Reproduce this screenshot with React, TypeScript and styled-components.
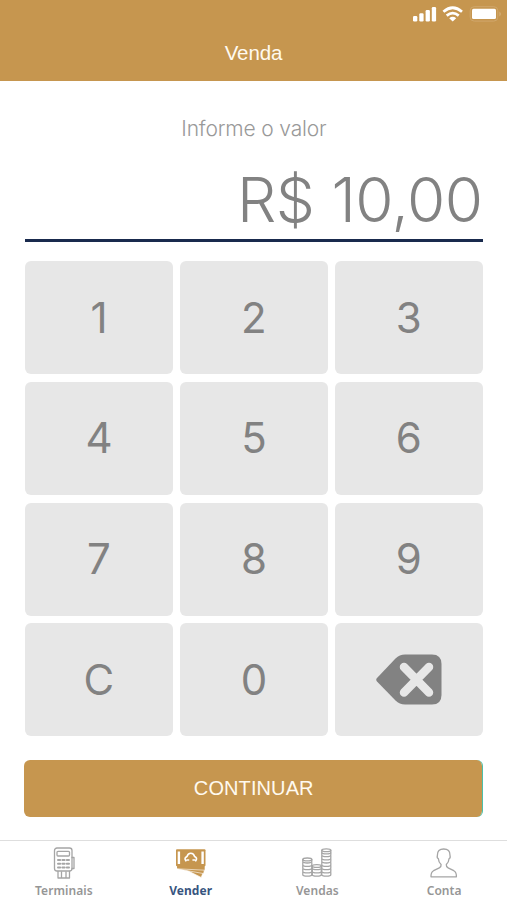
import React from "react";
import styled, { createGlobalStyle } from "styled-components";

const GOLD = "#c6964f";
const GREY = "#828282";

const GlobalStyle = createGlobalStyle`
  * { box-sizing: border-box; }
  body { margin: 0; background: #fff; }
  button { border: 0; padding: 0; background: none; font: inherit; }
  svg { display: block; }
`;

const Screen = styled.div`
  width: 507px;
  height: 900px;
  display: flex;
  flex-direction: column;
  background: #fff;
  overflow: hidden;
  font-family: Inter, sans-serif;
`;

const Header = styled.header`
  height: 81px;
  flex: none;
  background: ${GOLD};
`;

const StatusBar = styled.div`
  height: 28px;
  display: flex;
  justify-content: flex-end;
`;

const Title = styled.h1`
  margin: 0;
  padding-top: 13px;
  font: 400 20.5px/24px "Liberation Sans", sans-serif;
  letter-spacing: -0.1px;
  text-align: center;
  color: #fffaf0;
`;

const Main = styled.main`
  height: 759px;
  flex: none;
  padding: 35px 24.4px 0 25.2px;
`;

const Prompt = styled.p`
  margin: 0;
  font-size: 21px;
  line-height: 26px;
  font-weight: 300;
  letter-spacing: -0.15px;
  text-align: center;
  color: #999;
`;

const Amount = styled.div`
  height: 100px;
  padding-top: 20px;
  border-bottom: 3px solid #192a4d;
  font-size: 62px;
  line-height: 76px;
  font-weight: 300;
  letter-spacing: -0.5px;
  text-align: right;
  white-space: nowrap;
  color: ${GREY};
`;

const Keypad = styled.div`
  display: grid;
  grid-template-columns: repeat(3, 1fr);
  grid-auto-rows: 113px;
  gap: 7.7px 7.4px;
  margin-top: 19.3px;
`;

const Key = styled.button`
  display: flex;
  align-items: center;
  justify-content: center;
  border-radius: 6px;
  background: #e7e7e7;
  color: ${GREY};
  font-size: 42px;
  font-weight: 370;
  line-height: 1;
`;

const Continue = styled.button`
  display: block;
  width: 458.5px;
  height: 57px;
  margin: 23.5px 0 0 -1.2px;
  border-radius: 6px;
  border-right: 1px solid #4cc0aa;
  background: ${GOLD};
  background-clip: padding-box;
  padding-left: 2px;
  font: 400 20px/57px "Liberation Sans", sans-serif;
  letter-spacing: 0.1px;
  text-align: center;
  color: #fffaf0;
`;

const TabBar = styled.nav`
  height: 60px;
  display: grid;
  grid-template-columns: repeat(4, 1fr);
  border-top: 1px solid #dedede;
  background: #fff;
`;

const Tab = styled.button<{ $active?: boolean }>`
  display: flex;
  flex-direction: column;
  align-items: center;
  padding: 5px 0 0 1px;
  font: ${(p) => (p.$active ? 700 : 600)} 12px/16px "Noto Sans", sans-serif;
  letter-spacing: 0.05px;
  color: ${(p) => (p.$active ? "#38557f" : "#969696")};
`;

const TabIcon = styled.svg`
  width: 34px;
  height: 34px;
  margin-bottom: 3px;
  overflow: visible;
  fill: none;
  stroke: #a5a5a5;
  stroke-width: 1.3;
  stroke-linejoin: round;
  stroke-linecap: round;
`;

function StatusIcons() {
  return (
    <svg width="107" height="28" viewBox="0 0 107 28" fill="#fff">
      <rect x="13" y="16" width="4.3" height="5.5" rx="1.2" />
      <rect x="19.3" y="13.2" width="4.3" height="8.3" rx="1.2" />
      <rect x="25.6" y="10" width="4.3" height="11.5" rx="1.2" />
      <rect x="31.8" y="7" width="4.3" height="14.5" rx="1.2" />
      <g fill="none" stroke="#fff" strokeWidth="2.7">
        <path d="M43.4 11.8Q52.7 3.7 62 11.8" />
        <path d="M46.7 15.6Q52.7 10.5 58.7 15.6" />
      </g>
      <path d="M49.2 18.2Q52.7 15.4 56.2 18.2L52.7 21.6Z" />
      <rect x="70.2" y="6.7" width="27.6" height="14.4" rx="4" fill="none" stroke="#d0a76b" strokeWidth="1" />
      <rect x="72" y="8.8" width="24" height="10.3" rx="1.5" />
      <path d="M99.4 11.5Q102.4 14 99.4 16.5Z" fill="#d5af78" />
    </svg>
  );
}

function BackspaceIcon() {
  return (
    <svg width="66" height="51" viewBox="0 0 66 51">
      <path
        d="M1 24L19.5 4.5Q23.5.5 29 .5H56Q65.5.5 65.5 10V41Q65.5 50.5 56 50.5H29Q23.5 50.5 19.5 46.5L1 27.5Q-.5 25.7 1 24Z"
        fill={GREY}
      />
      <path d="M28 13L53 38.5M53 13L28 38.5" stroke="#e7e7e7" strokeWidth="8.5" strokeLinecap="round" />
    </svg>
  );
}

function TerminalIcon() {
  return (
    <TabIcon viewBox="0 0 34 34">
      <rect x="7.5" y="2" width="17.5" height="23" rx="2.5" />
      <rect x="10" y="5.3" width="12.5" height="4.7" rx="1" />
      <path d="M25 11.5h2v11h-2M11 25.3v6.7h11.5v-6.7M14.5 26v5.5M19 26v5.5" />
      <path d="M11 14h2.2M15.4 14h2.2M19.8 14h2.2M11 17.7h2.2M15.4 17.7h2.2M19.8 17.7h2.2M11 21.4h2.2M15.4 21.4h2.2M19.8 21.4h2.2" strokeWidth="2" />
    </TabIcon>
  );
}

function MoneyIcon() {
  return (
    <TabIcon viewBox="0 0 34 34">
      <g fill={GOLD} stroke="#fff" strokeWidth=".6">
        <path d="M14 20L29.5 25.6 27.2 31.4 10.5 23z" />
        <path d="M6 19L30.8 21.8 29.6 27.6 4 23z" />
        <path d="M3 19H31V24.2L3 22.8z" />
      </g>
      <rect x="2" y="3.2" width="29.5" height="17" rx="1" fill={GOLD} stroke="none" />
      <path d="M4.9 5.6v12.3M28.6 5.6v12.3" stroke="#fff" strokeWidth="2.4" strokeLinecap="butt" />
      <path d="M11.8 14.8Q9.8 12 13 10.5 13.8 7.2 16.8 7.2T20.6 10.5Q23.8 12 21.8 14.8M13 14h1.6M19 14h1.6" stroke="#fff" strokeWidth="1.6" />
    </TabIcon>
  );
}

function CoinStack({ x, tops }: { x: number; tops: number[] }) {
  return (
    <g>
      {tops.map((y) => (
        <path key={y} d={`M${x} ${y}v2.2q0 1.4 4.5 1.4t4.5-1.4v-2.2`} />
      ))}
      <ellipse cx={x + 4.5} cy={tops[0]} rx="4.5" ry="1.4" />
    </g>
  );
}

function CoinsIcon() {
  return (
    <TabIcon viewBox="0 0 34 34">
      <CoinStack x={2.8} tops={[13.4, 16.7, 20, 23.3, 26.6]} />
      <CoinStack x={12.3} tops={[20, 23.3, 26.6]} />
      <CoinStack x={21.8} tops={[4.2, 7, 10.2, 13.4, 16.7, 20, 23.3, 26.6]} />
    </TabIcon>
  );
}

function PersonIcon() {
  return (
    <TabIcon viewBox="0 0 34 34">
      <path d="M4 30.8Q3.8 26.3 6.6 24.7L12.3 21.8Q14.4 20.8 14.1 18.5 11.6 16.3 11.3 12.5 9.7 12 10.4 9.3 10.3 3 16.7 3T23 9.3Q23.7 12 22.1 12.5 21.8 16.3 19.3 18.5 19 20.8 21.1 21.8L26.8 24.7Q29.6 26.3 29.4 30.8Z" />
    </TabIcon>
  );
}

const KEYS = ["1", "2", "3", "4", "5", "6", "7", "8", "9", "C", "0"];

export default function App() {
  return (
    <>
      <GlobalStyle />
      <Screen>
        <Header>
          <StatusBar>
            <StatusIcons />
          </StatusBar>
          <Title>Venda</Title>
        </Header>
        <Main>
          <Prompt>Informe o valor</Prompt>
          <Amount>R$ 10,00</Amount>
          <Keypad>
            {KEYS.map((key) => (
              <Key key={key}>{key}</Key>
            ))}
            <Key aria-label="Apagar">
              <BackspaceIcon />
            </Key>
          </Keypad>
          <Continue>CONTINUAR</Continue>
        </Main>
        <TabBar>
          <Tab>
            <TerminalIcon />
            Terminais
          </Tab>
          <Tab $active>
            <MoneyIcon />
            Vender
          </Tab>
          <Tab>
            <CoinsIcon />
            Vendas
          </Tab>
          <Tab>
            <PersonIcon />
            Conta
          </Tab>
        </TabBar>
      </Screen>
    </>
  );
}
